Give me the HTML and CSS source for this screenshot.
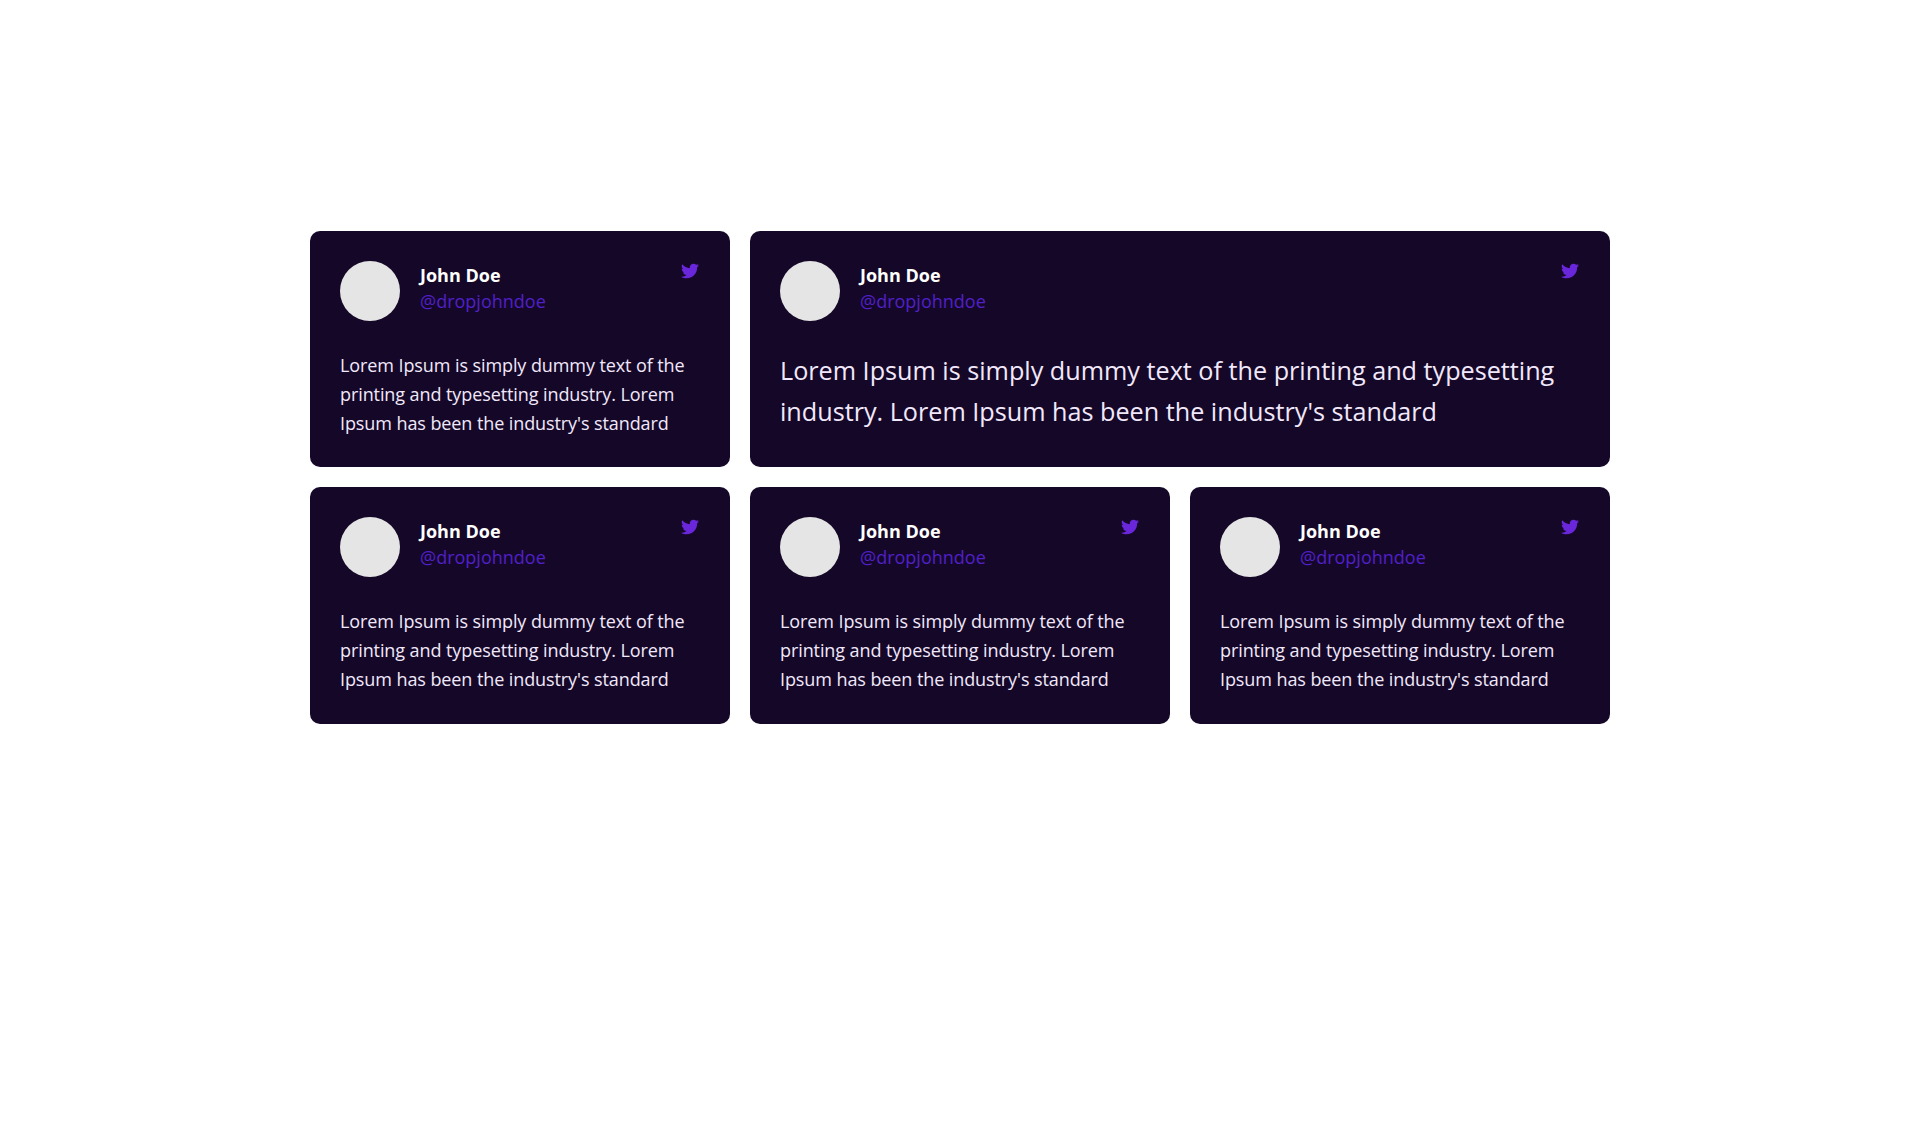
FILE: index.html
```html
<!DOCTYPE html>
<html lang="en">
<head>
    <meta charset="UTF-8">
    <title>Testimonials</title>
    <link rel="stylesheet" href="styles.css">
</head>
<body>
    <div class="tweet-grid">
        <div class="tweet-card">
            <div class="tweet-header">
                <div class="tweet-avatar"></div>
                <div class="tweet-user">
                    <div class="tweet-name">John Doe</div>
                    <div class="tweet-handle">@dropjohndoe</div>
                </div>
                <svg class="tweet-icon" viewBox="0 0 512 512"><path d="M459.37 151.716c.325 4.548.325 9.097.325 13.645 0 138.72-105.583 298.558-298.558 298.558-59.452 0-114.68-17.219-161.137-47.106 8.447.974 16.568 1.299 25.34 1.299 49.055 0 94.213-16.568 130.274-44.832-46.132-.975-84.792-31.188-98.112-72.772 6.498.974 12.995 1.624 19.818 1.624 9.421 0 18.843-1.3 27.614-3.573-48.081-9.747-84.143-51.98-84.143-102.985v-1.299c13.969 7.797 30.214 12.67 47.431 13.319-28.264-18.843-46.781-51.005-46.781-87.391 0-19.492 5.197-37.36 14.294-52.954 51.655 63.675 129.3 105.258 216.365 109.807-1.624-7.797-2.599-15.918-2.599-24.04 0-57.828 46.782-104.934 104.934-104.934 30.213 0 57.502 12.67 76.67 33.137 23.715-4.548 46.456-13.32 66.599-25.34-7.798 24.366-24.366 44.833-46.132 57.827 21.117-2.273 41.584-8.122 60.426-16.243-14.292 20.791-32.161 39.308-52.628 54.253z"/></svg>
            </div>
            <p class="tweet-text">Lorem Ipsum is simply dummy text of the printing and typesetting industry. Lorem Ipsum has been the industry's standard</p>
        </div>

        <div class="tweet-card tweet-card-wide">
            <div class="tweet-header">
                <div class="tweet-avatar"></div>
                <div class="tweet-user">
                    <div class="tweet-name">John Doe</div>
                    <div class="tweet-handle">@dropjohndoe</div>
                </div>
                <svg class="tweet-icon" viewBox="0 0 512 512"><path d="M459.37 151.716c.325 4.548.325 9.097.325 13.645 0 138.72-105.583 298.558-298.558 298.558-59.452 0-114.68-17.219-161.137-47.106 8.447.974 16.568 1.299 25.34 1.299 49.055 0 94.213-16.568 130.274-44.832-46.132-.975-84.792-31.188-98.112-72.772 6.498.974 12.995 1.624 19.818 1.624 9.421 0 18.843-1.3 27.614-3.573-48.081-9.747-84.143-51.98-84.143-102.985v-1.299c13.969 7.797 30.214 12.67 47.431 13.319-28.264-18.843-46.781-51.005-46.781-87.391 0-19.492 5.197-37.36 14.294-52.954 51.655 63.675 129.3 105.258 216.365 109.807-1.624-7.797-2.599-15.918-2.599-24.04 0-57.828 46.782-104.934 104.934-104.934 30.213 0 57.502 12.67 76.67 33.137 23.715-4.548 46.456-13.32 66.599-25.34-7.798 24.366-24.366 44.833-46.132 57.827 21.117-2.273 41.584-8.122 60.426-16.243-14.292 20.791-32.161 39.308-52.628 54.253z"/></svg>
            </div>
            <p class="tweet-text">Lorem Ipsum is simply dummy text of the printing and typesetting industry. Lorem Ipsum has been the industry's standard</p>
        </div>

        <div class="tweet-card">
            <div class="tweet-header">
                <div class="tweet-avatar"></div>
                <div class="tweet-user">
                    <div class="tweet-name">John Doe</div>
                    <div class="tweet-handle">@dropjohndoe</div>
                </div>
                <svg class="tweet-icon" viewBox="0 0 512 512"><path d="M459.37 151.716c.325 4.548.325 9.097.325 13.645 0 138.72-105.583 298.558-298.558 298.558-59.452 0-114.68-17.219-161.137-47.106 8.447.974 16.568 1.299 25.34 1.299 49.055 0 94.213-16.568 130.274-44.832-46.132-.975-84.792-31.188-98.112-72.772 6.498.974 12.995 1.624 19.818 1.624 9.421 0 18.843-1.3 27.614-3.573-48.081-9.747-84.143-51.98-84.143-102.985v-1.299c13.969 7.797 30.214 12.67 47.431 13.319-28.264-18.843-46.781-51.005-46.781-87.391 0-19.492 5.197-37.36 14.294-52.954 51.655 63.675 129.3 105.258 216.365 109.807-1.624-7.797-2.599-15.918-2.599-24.04 0-57.828 46.782-104.934 104.934-104.934 30.213 0 57.502 12.67 76.67 33.137 23.715-4.548 46.456-13.32 66.599-25.34-7.798 24.366-24.366 44.833-46.132 57.827 21.117-2.273 41.584-8.122 60.426-16.243-14.292 20.791-32.161 39.308-52.628 54.253z"/></svg>
            </div>
            <p class="tweet-text">Lorem Ipsum is simply dummy text of the printing and typesetting industry. Lorem Ipsum has been the industry's standard</p>
        </div>

        <div class="tweet-card">
            <div class="tweet-header">
                <div class="tweet-avatar"></div>
                <div class="tweet-user">
                    <div class="tweet-name">John Doe</div>
                    <div class="tweet-handle">@dropjohndoe</div>
                </div>
                <svg class="tweet-icon" viewBox="0 0 512 512"><path d="M459.37 151.716c.325 4.548.325 9.097.325 13.645 0 138.72-105.583 298.558-298.558 298.558-59.452 0-114.68-17.219-161.137-47.106 8.447.974 16.568 1.299 25.34 1.299 49.055 0 94.213-16.568 130.274-44.832-46.132-.975-84.792-31.188-98.112-72.772 6.498.974 12.995 1.624 19.818 1.624 9.421 0 18.843-1.3 27.614-3.573-48.081-9.747-84.143-51.98-84.143-102.985v-1.299c13.969 7.797 30.214 12.67 47.431 13.319-28.264-18.843-46.781-51.005-46.781-87.391 0-19.492 5.197-37.36 14.294-52.954 51.655 63.675 129.3 105.258 216.365 109.807-1.624-7.797-2.599-15.918-2.599-24.04 0-57.828 46.782-104.934 104.934-104.934 30.213 0 57.502 12.67 76.67 33.137 23.715-4.548 46.456-13.32 66.599-25.34-7.798 24.366-24.366 44.833-46.132 57.827 21.117-2.273 41.584-8.122 60.426-16.243-14.292 20.791-32.161 39.308-52.628 54.253z"/></svg>
            </div>
            <p class="tweet-text">Lorem Ipsum is simply dummy text of the printing and typesetting industry. Lorem Ipsum has been the industry's standard</p>
        </div>

        <div class="tweet-card">
            <div class="tweet-header">
                <div class="tweet-avatar"></div>
                <div class="tweet-user">
                    <div class="tweet-name">John Doe</div>
                    <div class="tweet-handle">@dropjohndoe</div>
                </div>
                <svg class="tweet-icon" viewBox="0 0 512 512"><path d="M459.37 151.716c.325 4.548.325 9.097.325 13.645 0 138.72-105.583 298.558-298.558 298.558-59.452 0-114.68-17.219-161.137-47.106 8.447.974 16.568 1.299 25.34 1.299 49.055 0 94.213-16.568 130.274-44.832-46.132-.975-84.792-31.188-98.112-72.772 6.498.974 12.995 1.624 19.818 1.624 9.421 0 18.843-1.3 27.614-3.573-48.081-9.747-84.143-51.98-84.143-102.985v-1.299c13.969 7.797 30.214 12.67 47.431 13.319-28.264-18.843-46.781-51.005-46.781-87.391 0-19.492 5.197-37.36 14.294-52.954 51.655 63.675 129.3 105.258 216.365 109.807-1.624-7.797-2.599-15.918-2.599-24.04 0-57.828 46.782-104.934 104.934-104.934 30.213 0 57.502 12.67 76.67 33.137 23.715-4.548 46.456-13.32 66.599-25.34-7.798 24.366-24.366 44.833-46.132 57.827 21.117-2.273 41.584-8.122 60.426-16.243-14.292 20.791-32.161 39.308-52.628 54.253z"/></svg>
            </div>
            <p class="tweet-text">Lorem Ipsum is simply dummy text of the printing and typesetting industry. Lorem Ipsum has been the industry's standard</p>
        </div>
    </div>
</body>
</html>
```

FILE: styles.css
```css
body {
    margin: 0;
    padding-top: 231px;
    background: #fff;
    font-family: "Open Sans", sans-serif;
}

.tweet-grid {
    display: grid;
    grid-template-columns: repeat(3, 420px);
    gap: 20px;
    width: 1300px;
    margin: 0 auto;
}

.tweet-card {
    background: #150728;
    border-radius: 10px;
    padding: 30px;
}

.tweet-card-wide {
    grid-column: span 2;
}

.tweet-header {
    display: flex;
    align-items: flex-start;
    gap: 20px;
}

.tweet-avatar {
    width: 60px;
    height: 60px;
    border-radius: 50%;
    background: #e5e5e5;
    flex-shrink: 0;
}

.tweet-user {
    flex: 1;
    padding-top: 2px;
}

.tweet-name {
    color: #fff;
    font-size: 18px;
    font-weight: 700;
    line-height: 25px;
}

.tweet-handle {
    color: #5020c8;
    font-size: 18px;
    line-height: 26px;
}

.tweet-icon {
    width: 18px;
    height: 18px;
    margin-top: 1px;
    margin-right: 1px;
    fill: #6a26da;
}

.tweet-text {
    margin: 30px 0 0;
    color: #f1e9fb;
    font-size: 18px;
    line-height: 28.8px;
    letter-spacing: -0.09px;
}

.tweet-card-wide .tweet-text {
    margin-top: 29px;
    font-size: 25.2px;
    line-height: 41px;
    letter-spacing: 0;
}
```
